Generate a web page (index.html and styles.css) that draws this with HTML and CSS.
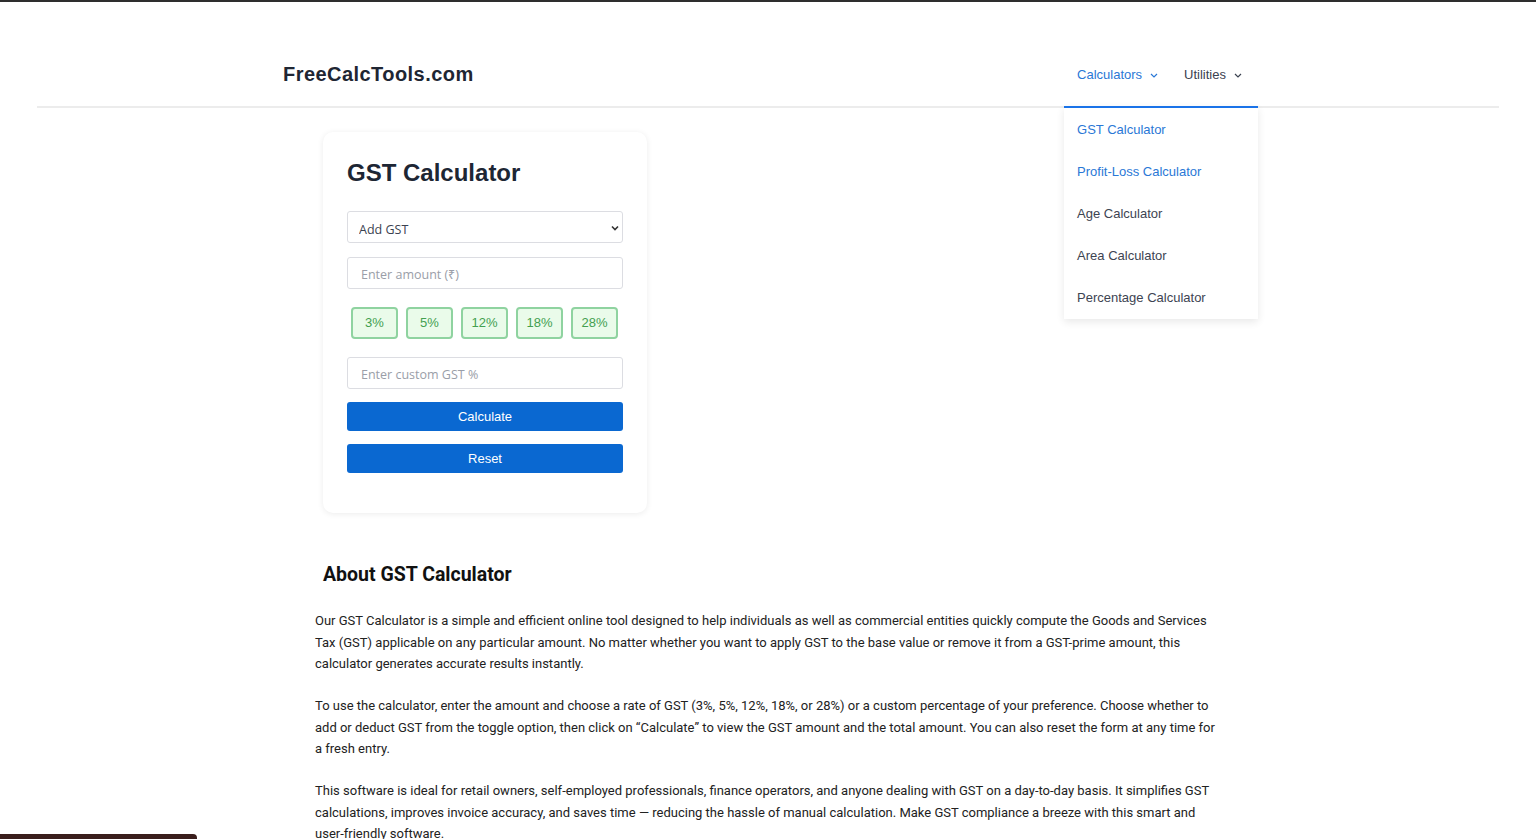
FILE: index.html
```html
<!DOCTYPE html>
<html lang="en">
<head>
<meta charset="utf-8">
<title>GST Calculator - FreeCalcTools.com</title>
<link rel="stylesheet" href="styles.css">
</head>
<body>
<div class="topbar"></div>
<header class="site-header">
  <div class="header-inner">
    <a class="logo" href="#">FreeCalcTools.com</a>
    <nav class="nav">
      <div class="nav-item active">
        <span>Calculators</span>
        <svg class="chev" width="8" height="5" viewBox="0 0 8 5"><path d="M1 1l3 3 3-3" fill="none" stroke="currentColor" stroke-width="1.2"/></svg>
        <ul class="dropdown">
          <li class="blue">GST Calculator</li>
          <li class="blue">Profit-Loss Calculator</li>
          <li>Age Calculator</li>
          <li>Area Calculator</li>
          <li>Percentage Calculator</li>
        </ul>
      </div>
      <div class="nav-item">
        <span>Utilities</span>
        <svg class="chev" width="8" height="5" viewBox="0 0 8 5"><path d="M1 1l3 3 3-3" fill="none" stroke="currentColor" stroke-width="1.2"/></svg>
      </div>
    </nav>
  </div>
</header>
<main class="main">
  <section class="card">
    <h1 class="card-title">GST Calculator</h1>
    <div class="select-wrap">
      <select class="field select">
        <option>Add GST</option>
        <option>Remove GST</option>
      </select>
      <svg class="select-chev" width="8" height="6" viewBox="0 0 8 6"><path d="M1 1.5l3 3 3-3" fill="none" stroke="#333" stroke-width="1.6"/></svg>
    </div>
    <input class="field amount" type="text" placeholder="Enter amount (₹)">
    <div class="rates">
      <button class="rate">3%</button>
      <button class="rate">5%</button>
      <button class="rate">12%</button>
      <button class="rate">18%</button>
      <button class="rate">28%</button>
    </div>
    <input class="field custom" type="text" placeholder="Enter custom GST %">
    <button class="primary">Calculate</button>
    <button class="primary">Reset</button>
  </section>
  <section class="about">
    <h2 class="about-title">About GST Calculator</h2>
    <p>Our GST Calculator is a simple and efficient online tool designed to help individuals as well as commercial entities quickly compute the Goods and Services Tax (GST) applicable on any particular amount. No matter whether you want to apply GST to the base value or remove it from a GST-prime amount, this calculator generates accurate results instantly.</p>
    <p>To use the calculator, enter the amount and choose a rate of GST (3%, 5%, 12%, 18%, or 28%) or a custom percentage of your preference. Choose whether to add or deduct GST from the toggle option, then click on “Calculate” to view the GST amount and the total amount. You can also reset the form at any time for a fresh entry.</p>
    <p>This software is ideal for retail owners, self-employed professionals, finance operators, and anyone dealing with GST on a day-to-day basis. It simplifies GST calculations, improves invoice accuracy, and saves time — reducing the hassle of manual calculation. Make GST compliance a breeze with this smart and user-friendly software.</p>
  </section>
</main>
<div class="corner-bar"></div>
</body>
</html>
```

FILE: styles.css
```css
* { box-sizing: border-box; }
html, body { margin: 0; padding: 0; background: #fff; }
body { font-family: "Liberation Sans", Arial, sans-serif; color: #222; }

.topbar { height: 2px; background: #2e2e2e; }

.site-header {
  margin: 0 37px;
  border-bottom: 2px solid #ececec;
  padding-top: 40px;
}
.header-inner {
  width: 970px;
  margin: 0 auto;
  height: 64px;
  display: flex;
  align-items: center;
  justify-content: space-between;
}
.logo {
  font-family: "Liberation Sans", Arial, sans-serif;
  font-weight: bold;
  font-size: 20px;
  color: #1f2633;
  text-decoration: none;
  letter-spacing: 0.45px;
}
.nav { display: flex; height: 100%; margin-right: -2px; }
.nav-item {
  position: relative;
  display: flex;
  align-items: center;
  gap: 8px;
  padding: 1px 13px 0;
  font-size: 13px;
  color: #3b4250;
}
.nav-item.active { color: #2a78d6; }
.chev { margin-top: 1px; }
.dropdown {
  position: absolute;
  top: 64px;
  left: 0;
  width: 194px;
  margin: 0;
  padding: 1px 0 0;
  list-style: none;
  background: #fff;
  border-top: 2px solid #1a73e8;
  box-shadow: 0 3px 8px rgba(0,0,0,0.09);
  z-index: 10;
}
.dropdown li {
  height: 42px;
  line-height: 42px;
  padding-left: 13px;
  font-size: 13px;
  color: #3d4452;
  white-space: nowrap;
}
.dropdown li.blue { color: #2a78d6; }

.main {
  width: 906px;
  margin: 0 auto;
  padding-top: 24px;
}
.card {
  width: 324px;
  margin-left: 8px;
  background: #fff;
  border-radius: 10px;
  box-shadow: 0 1px 6px rgba(0,0,0,0.08);
  padding: 24px 24px 24px;
  display: flex;
  flex-direction: column;
}
.card-title {
  margin: 0 0 21px;
  font-size: 24px;
  line-height: 34px;
  font-weight: bold;
  color: #1d2634;
}
.field {
  display: block;
  width: 100%;
  height: 32px;
  border: 1px solid #dcdde2;
  border-radius: 3px;
  background: #fff;
  font-family: "Open Sans", sans-serif;
  font-size: 12.5px;
  color: #3b4250;
  outline: none;
}
.field::placeholder { color: #9a9ea8; }
.select-wrap { position: relative; margin-bottom: 14px; }
.select {
  appearance: none;
  -webkit-appearance: none;
  padding: 5px 11px 0;
}
.select-chev { position: absolute; right: 4px; top: 14px; }
.amount { margin-bottom: 18px; padding: 2px 13px 0; }
.rates {
  display: flex;
  margin-bottom: 18px;
}
.rate {
  width: 47px;
  height: 32px;
  margin: 0 4px;
  background: #eafbea;
  border: 2px solid #8fd3a0;
  border-radius: 4px;
  color: #43a050;
  font-family: "Liberation Sans", Arial, sans-serif;
  font-size: 13px;
  padding: 0 0 1px;
}
.custom { margin-bottom: 13px; padding: 2px 13px 0; }
.primary {
  height: 29px;
  width: 100%;
  margin-bottom: 13px;
  border: none;
  border-radius: 3px;
  background: #0a68d1;
  color: #fff;
  font-family: "Liberation Sans", Arial, sans-serif;
  font-size: 13px;
}
.primary:last-child { margin-bottom: 16px; }

.about { padding-top: 49px; }
.about-title {
  margin: 0 0 22px 8px;
  font-family: Roboto, sans-serif;
  font-weight: bold;
  font-size: 19.5px;
  line-height: 26px;
  color: #111;
}
.about p {
  margin: 0 0 20.5px;
  font-family: Roboto, sans-serif;
  font-size: 13px;
  line-height: 21.5px;
  color: #222;
}

.corner-bar {
  position: fixed;
  left: 0;
  bottom: 0;
  width: 197px;
  height: 5px;
  background: #3a1e1c;
  border-top-right-radius: 4px;
}
```
